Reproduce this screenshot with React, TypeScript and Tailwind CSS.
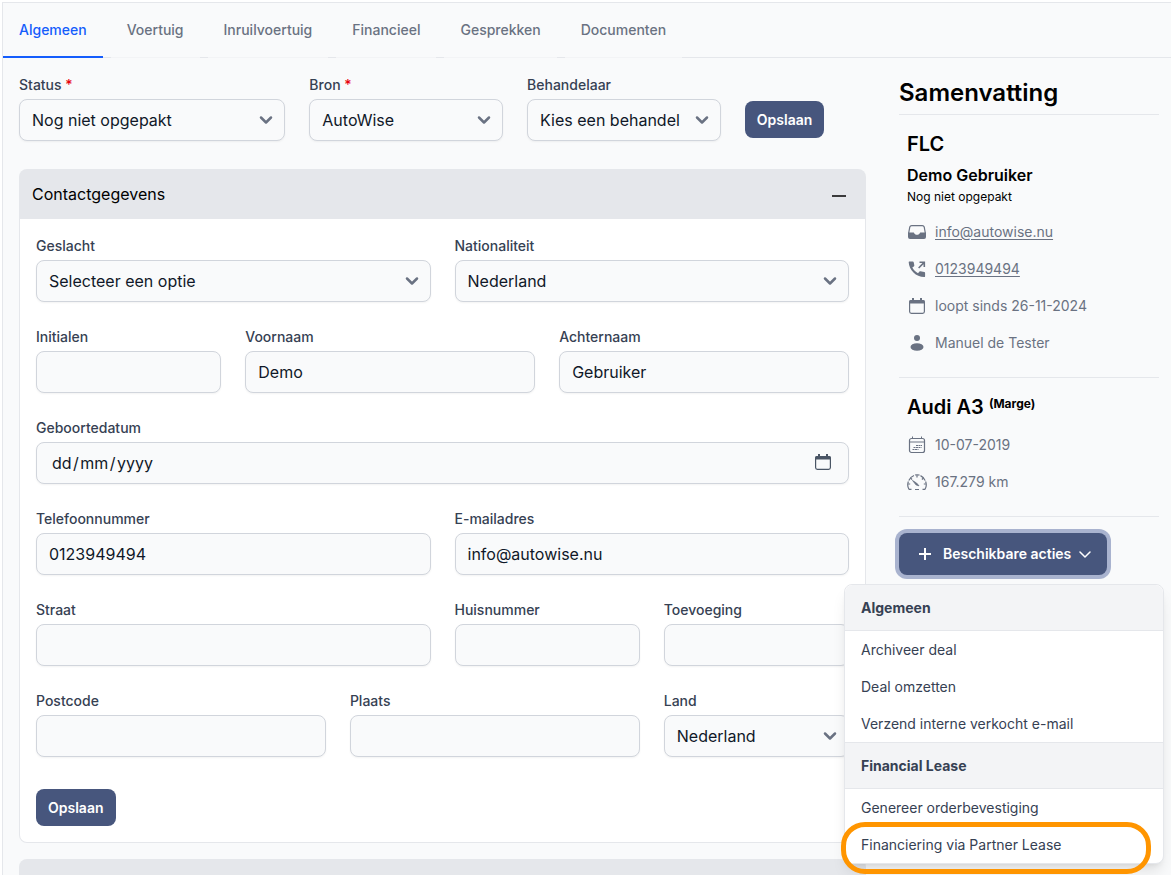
import type { ReactNode } from "react";
import { ChevronDown } from "lucide-react";
import clsx from "clsx";

const tabs = [
  "Algemeen",
  "Voertuig",
  "Inruilvoertuig",
  "Financieel",
  "Gesprekken",
  "Documenten",
];

const actionGroups = [
  {
    title: "Algemeen",
    actions: ["Archiveer deal", "Deal omzetten", "Verzend interne verkocht e-mail"],
  },
  {
    title: "Financial Lease",
    actions: ["Genereer orderbevestiging", "Financiering via Partner Lease"],
  },
];

const controlClass =
  "block h-[42px] w-full rounded-lg border border-gray-300 bg-gray-50 px-3 text-base text-gray-900 shadow-xs";

type FieldProps = {
  id: string;
  label: string;
  className: string;
  required?: boolean;
};

function Field({
  id,
  label,
  className,
  required,
  children,
}: FieldProps & { children: ReactNode }) {
  return (
    <div className={clsx("min-w-0", className)}>
      <label
        htmlFor={id}
        className="mb-1 block text-sm leading-[21px] font-medium text-gray-700"
      >
        {label} {required && <span className="text-red-600">*</span>}
      </label>
      {children}
    </div>
  );
}

function TextField({ value, ...field }: FieldProps & { value?: string }) {
  return (
    <Field {...field}>
      <input id={field.id} type="text" defaultValue={value} className={controlClass} />
    </Field>
  );
}

function SelectField({ value, ...field }: FieldProps & { value: string }) {
  return (
    <Field {...field}>
      <div className="relative">
        <select
          id={field.id}
          defaultValue={value}
          className={clsx(controlClass, "appearance-none pr-10")}
        >
          <option>{value}</option>
        </select>
        <ChevronDown
          size={20}
          strokeWidth={3}
          className="pointer-events-none absolute top-[11px] right-[9px] text-gray-500"
        />
      </div>
    </Field>
  );
}

function SaveButton() {
  return (
    <button
      type="button"
      className="rounded-lg bg-[#47567d] px-3 py-2 text-sm leading-[21px] font-semibold text-white"
    >
      Opslaan
    </button>
  );
}

function CalendarIcon() {
  return (
    <svg width="18" height="18" viewBox="0 0 18 18" fill="none" aria-hidden="true">
      <rect x="1.6" y="3.6" width="14.800" height="12.800" rx="1.800" stroke="currentColor" strokeWidth="1.200" />
      <path d="M1 5a2 2 0 0 1 2-2h12a2 2 0 0 1 2 2v1.500H1zM4 1h2v2H4zM12 1h2v2h-2z" fill="currentColor" />
    </svg>
  );
}

function InboxIcon() {
  return (
    <svg width="20" height="20" viewBox="0 0 20 20" fill="none" aria-hidden="true">
      <path
        d="M1.600 11.500 2.800 5Q3.200 3.600 4.700 3.600h10.600q1.500 0 1.900 1.400l1.200 6.500"
        stroke="currentColor"
        strokeWidth="1.200"
      />
      <path
        d="M1 10.500h5.500c.7 0 .9 2.300 3.500 2.300s2.800-2.300 3.500-2.300H19V15a2 2 0 0 1-2 2H3a2 2 0 0 1-2-2z"
        fill="currentColor"
      />
    </svg>
  );
}

function PhoneIcon() {
  return (
    <svg width="20" height="20" viewBox="0 0 20 20" fill="currentColor" aria-hidden="true">
      <path d="M2.200 2.500h3.600c.5 0 .8.300.9.800l.6 3c.1.500-.1.800-.5 1.100L5.300 8.600c1.300 2.400 3.200 4.300 5.700 5.600l1.300-1.500c.3-.4.700-.5 1.100-.4l3.900.8c.5.100.8.400.8.900v3.200c0 .5-.4.900-.9.900C9 18.100 2 11 1.700 3.300c0-.5.1-.8.5-.8z" />
      <path d="M12.500 2.500h5.600v5.600h-1.600V5.200l-4.300 4.300-1.100-1.100 4.300-4.300h-2.900z" />
    </svg>
  );
}

function PersonIcon() {
  return (
    <svg width="20" height="20" viewBox="0 0 20 20" fill="currentColor" aria-hidden="true">
      <circle cx="10" cy="5" r="3" />
      <ellipse cx="10" cy="14" rx="6.500" ry="3.800" />
    </svg>
  );
}

function CalendarDatesIcon() {
  return (
    <svg
      width="20"
      height="20"
      viewBox="0 0 20 20"
      fill="none"
      stroke="currentColor"
      aria-hidden="true"
    >
      <rect x="2.500" y="3.500" width="15" height="14" rx="2" strokeWidth="1.200" />
      <path d="M2.500 7h15M5.500 1.500v2M14.500 1.500v2" />
      <path d="M9 10.500h6M6.500 12.500h8M5.500 14.500h6" strokeDasharray="2 0.500" />
    </svg>
  );
}

function GaugeIcon() {
  return (
    <svg
      width="20"
      height="20"
      viewBox="0 0 20 20"
      fill="none"
      stroke="currentColor"
      strokeWidth="1.200"
      aria-hidden="true"
    >
      <path d="M2 17.500a9.400 9.400 0 0 1-.6-8M1.800 8.500a9.400 9.400 0 0 1 5.200-5M8 3a9.400 9.400 0 0 1 4.500.1M13.500 3.600a9.400 9.400 0 0 1 4.700 5M18.600 9.500a9.400 9.400 0 0 1-.6 8" />
      <path d="M10 3v2.500M1.200 12h2M16.800 12h2M3.500 6l1.600 1.500M16.500 6l-1.600 1.500M2 17.300h2.500M15.500 17.300H18M8 17.500h4" />
      <path d="m5.500 8.500 4 2.500 2.500 2.800-2.800-.8z" fill="currentColor" strokeWidth="0.800" />
    </svg>
  );
}

function SummaryRow({ icon, children }: { icon: ReactNode; children: ReactNode }) {
  return (
    <li className="flex h-[21px] items-center gap-2 text-sm text-gray-500">
      <span className="flex w-5 shrink-0 justify-center">{icon}</span>
      {children}
    </li>
  );
}

function ActionsMenu() {
  return (
    <div className="absolute top-full -right-[5px] z-10 mt-[9px] w-80 rounded-lg border border-gray-200 bg-white text-sm leading-[21px] text-gray-700 shadow-lg">
      {actionGroups.map((group, groupIndex) => (
        <div key={group.title}>
          <h3
            className={clsx(
              "border-b border-gray-200 bg-gray-100 px-4 py-3 font-bold",
              groupIndex === 0 ? "rounded-t-lg" : "border-t",
            )}
          >
            {group.title}
          </h3>
          <ul>
            {group.actions.map((action) => (
              <li key={action} className="relative">
                <button type="button" className="block w-full px-4 py-2 text-left">
                  {action}
                </button>
                {action === "Financiering via Partner Lease" && (
                  <span className="pointer-events-none absolute -top-1 right-3 -bottom-[11px] -left-1 rounded-3xl border-5 border-[#ff9500]" />
                )}
              </li>
            ))}
          </ul>
        </div>
      ))}
    </div>
  );
}

function Summary() {
  return (
    <aside className="w-65 shrink-0 pt-0.5 text-black">
      <h2 className="border-b border-gray-200 pb-1 text-2xl leading-[34px] font-semibold">
        Samenvatting
      </h2>

      <div className="border-b border-gray-200 px-2 pt-4 pb-6">
        <h3 className="text-xl leading-[26px] font-semibold">FLC</h3>
        <p className="mt-1.5 leading-6 font-semibold">Demo Gebruiker</p>
        <p className="text-xs leading-5">Nog niet opgepakt</p>
        <ul className="mt-3.5 space-y-4">
          <SummaryRow icon={<InboxIcon />}>
            <a href="#mail" className="underline underline-offset-2">
              info@autowise.nu
            </a>
          </SummaryRow>
          <SummaryRow icon={<PhoneIcon />}>
            <a href="#bellen" className="underline underline-offset-2">
              0123949494
            </a>
          </SummaryRow>
          <SummaryRow icon={<CalendarIcon />}>loopt sinds 26-11-2024</SummaryRow>
          <SummaryRow icon={<PersonIcon />}>Manuel de Tester</SummaryRow>
        </ul>
      </div>

      <div className="border-b border-gray-200 px-2 pt-4 pb-6">
        <h3 className="text-xl leading-[26px] font-semibold">
          Audi A3 <sup className="text-xs font-bold">(Marge)</sup>
        </h3>
        <ul className="mt-3.5 space-y-4">
          <SummaryRow icon={<CalendarDatesIcon />}>10-07-2019</SummaryRow>
          <SummaryRow icon={<GaugeIcon />}>167.279 km</SummaryRow>
        </ul>
      </div>

      <div className="relative mt-4">
        <button
          type="button"
          aria-expanded="true"
          className="flex h-[42px] items-center rounded-lg bg-[#47567d] pr-4 pl-5 text-sm font-semibold text-white ring-4 ring-[#a9b3cf]"
        >
          <svg width="12" height="12" viewBox="0 0 12 12" stroke="currentColor" strokeWidth="2" aria-hidden="true">
            <path d="M6 0v12M0 6h12" />
          </svg>
          <span className="mr-2 ml-3">Beschikbare acties</span>
          <svg
            width="12"
            height="12"
            viewBox="0 0 12 12"
            fill="none"
            stroke="currentColor"
            strokeWidth="1.500"
            strokeLinecap="round"
            strokeLinejoin="round"
            aria-hidden="true"
          >
            <path d="m1 4 5 5 5-5" />
          </svg>
        </button>
        <ActionsMenu />
      </div>
    </aside>
  );
}

function SectionHeader({ title, label }: { title?: string; label: string }) {
  return (
    <h2>
      <button
        type="button"
        aria-label={label}
        className="flex h-[50px] w-full items-center justify-between rounded-t-lg bg-gray-200 pr-5 pl-[13px] text-base text-black"
      >
        {title}
        {title && (
          <svg width="14" height="14" viewBox="0 0 14 14" stroke="currentColor" strokeWidth="1.500" aria-hidden="true">
            <path d="M0 9h14" />
          </svg>
        )}
      </button>
    </h2>
  );
}

export default function App() {
  return (
    <div className="h-screen overflow-hidden bg-white pt-0.5 pl-0.5 font-['Inter',sans-serif]">
      <div className="min-h-full border-t border-l border-gray-200 bg-gray-50">
        <nav className="flex h-[55px] gap-2 border-b border-gray-200 text-sm font-medium">
          {tabs.map((tab, i) => (
            <a
              key={tab}
              href={`#${tab.toLowerCase()}`}
              className={clsx(
                "-mb-px px-4 pt-[17px] leading-5",
                i === 0
                  ? "border-b-2 border-blue-600 text-blue-600"
                  : "border-b border-gray-100 text-gray-500",
              )}
            >
              {tab}
            </a>
          ))}
        </nav>

        <div className="flex gap-[33px] pt-4 pr-3 pl-4">
          <main className="min-w-0 flex-1">
            <form className="grid grid-cols-12 gap-6">
              <SelectField id="status" label="Status" required value="Nog niet opgepakt" className="col-span-4" />
              <SelectField id="bron" label="Bron" required value="AutoWise" className="col-span-3" />
              <SelectField id="behandelaar" label="Behandelaar" value="Kies een behandelaar" className="col-span-3" />
              <div className="col-span-2 flex items-start pt-[27px]">
                <SaveButton />
              </div>
            </form>

            <section className="mt-7">
              <SectionHeader title="Contactgegevens" label="Contactgegevens" />
              <form className="rounded-b-lg border border-t-0 border-gray-200 bg-white p-4">
                <div className="grid grid-cols-8 gap-6">
                  <SelectField id="geslacht" label="Geslacht" value="Selecteer een optie" className="col-span-4" />
                  <SelectField id="nationaliteit" label="Nationaliteit" value="Nederland" className="col-span-4" />

                  <TextField id="initialen" label="Initialen" className="col-span-2" />
                  <TextField id="voornaam" label="Voornaam" value="Demo" className="col-span-3" />
                  <TextField id="achternaam" label="Achternaam" value="Gebruiker" className="col-span-3" />

                  <Field id="geboortedatum" label="Geboortedatum" className="col-span-8">
                    <div className="relative">
                      <input
                        id="geboortedatum"
                        type="text"
                        placeholder={"dd\u200a/\u200amm\u200a/\u200ayyyy"}
                        className={clsx(controlClass, "pl-[15px] placeholder:text-gray-900")}
                      />
                      <button
                        type="button"
                        aria-label="Kies een datum"
                        className="absolute top-[11px] right-[17px] text-gray-600"
                      >
                        <CalendarIcon />
                      </button>
                    </div>
                  </Field>

                  <TextField id="telefoon" label="Telefoonnummer" value="0123949494" className="col-span-4" />
                  <TextField id="email" label="E-mailadres" value="info@autowise.nu" className="col-span-4" />

                  <TextField id="straat" label="Straat" className="col-span-4" />
                  <TextField id="huisnummer" label="Huisnummer" className="col-span-2" />
                  <TextField id="toevoeging" label="Toevoeging" className="col-span-2" />

                  <TextField id="postcode" label="Postcode" className="col-span-3" />
                  <TextField id="plaats" label="Plaats" className="col-span-3" />
                  <SelectField id="land" label="Land" value="Nederland" className="col-span-2" />
                </div>
                <div className="mt-8 flex">
                  <SaveButton />
                </div>
              </form>
            </section>

            <section className="mt-4">
              <SectionHeader label="Voertuig" />
            </section>
          </main>

          <Summary />
        </div>
      </div>
    </div>
  );
}
